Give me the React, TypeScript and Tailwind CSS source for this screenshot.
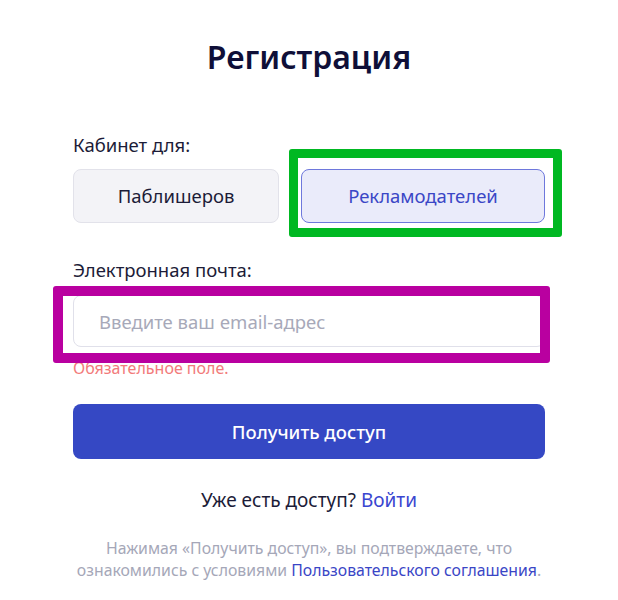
export default function App() {
  return (
    <main className="min-h-[600px] w-full bg-white font-['Noto_Sans',sans-serif]">
      <div className="mx-auto w-[472px] pt-[37px]">
        <h1 className="text-center text-[32px] font-semibold leading-[40px] text-[#0f0f38]">
          Регистрация
        </h1>

        <p className="mt-[56px] text-[18.5px] leading-[24px] text-[#1c1c38]">Кабинет для:</p>
        <div className="mt-[12px] flex gap-[22px]">
          <button className="h-[54px] w-[207px] rounded-lg border border-[#e2e2ea] bg-[#f3f3f7] text-[18.5px] text-[#1c1c38]">
            Паблишеров
          </button>
          <div className="relative">
            <button className="h-[54px] w-[244px] rounded-lg border border-[#6e78dc] bg-[#eaebfa] text-[18.5px] text-[#3a46c6]">
              Рекламодателей
            </button>
            <div className="pointer-events-none absolute -top-[20px] -bottom-[14px] -left-[12px] -right-[17px] rounded-[3px] border-[9px] border-[#00b822]"></div>
          </div>
        </div>

        <p className="mt-[35px] text-[18.5px] leading-[24px] text-[#1c1c38]">Электронная почта:</p>
        <div className="relative mt-[13px]">
          <input
            type="email"
            placeholder="Введите ваш email-адрес"
            className="h-[52px] w-full rounded-lg border border-[#e0e0ea] bg-white px-[25px] text-[18.5px] text-[#1c1c38] outline-none placeholder:text-[#a7a9b9]"
          />
          <div className="pointer-events-none absolute -top-[9px] -bottom-[16px] -left-[20px] -right-[5px] rounded-[3px] border-[10px] border-[#b900a0]"></div>
        </div>
        <p className="mt-[11px] text-[16px] leading-[20px] text-[#f27a7a]">Обязательное поле.</p>

        <button className="mt-[26px] h-[55px] w-full rounded-lg bg-[#3548c4] text-[18.5px] font-medium text-white">
          Получить доступ
        </button>

        <p className="mt-[29px] text-center text-[19px] leading-[24px] text-[#1c1c38]">
          Уже есть доступ? <a className="text-[#3a46d0]">Войти</a>
        </p>

        <p className="mt-[25px] text-center text-[15.8px] leading-[22px] text-[#a5a7b8]">
          Нажимая «Получить доступ», вы подтверждаете, что
          <br />
          ознакомились с условиями <a className="text-[#3a46c6]">Пользовательского соглашения</a>.
        </p>
      </div>
    </main>
  );
}
